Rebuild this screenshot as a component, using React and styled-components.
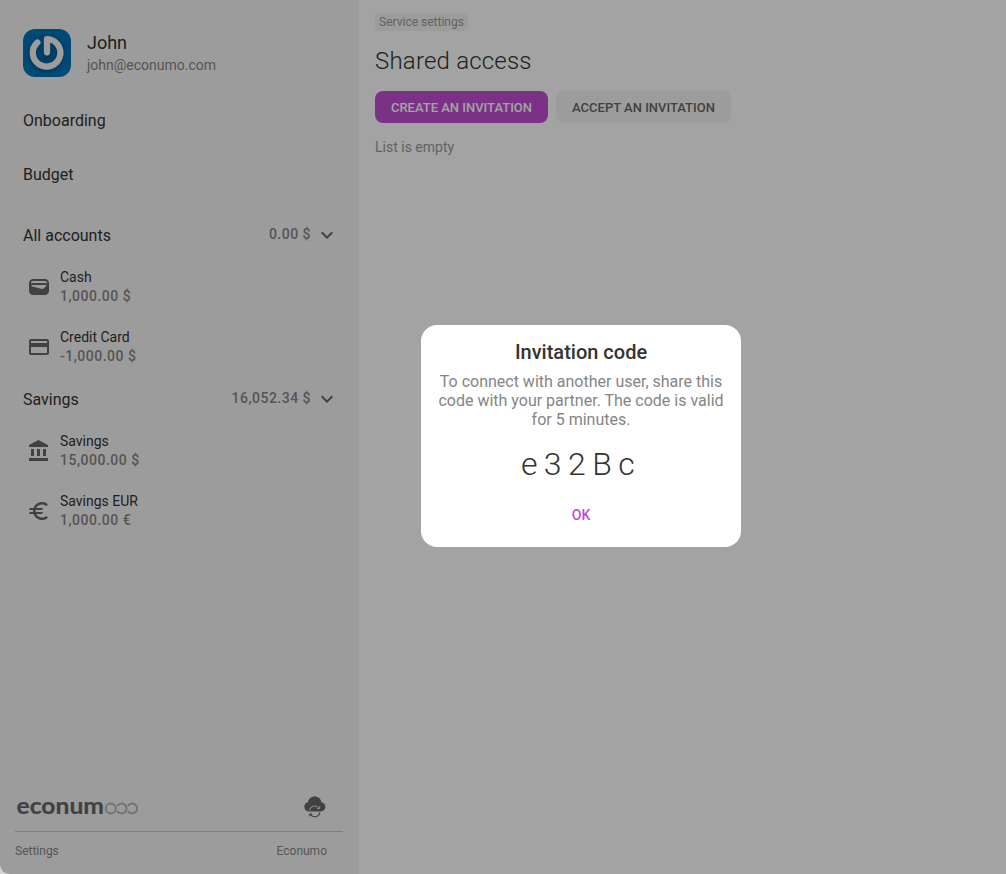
import React from "react";
import styled, { createGlobalStyle } from "styled-components";
import { MdCreditCard, MdExpandMore, MdWallet } from "react-icons/md";

const GlobalStyle = createGlobalStyle`
  * { box-sizing: border-box; }
  body {
    margin: 0;
    background: #d6d6d6;
    font-family: Roboto, "Liberation Sans", sans-serif;
    color: #333;
  }
  button { font-family: inherit; border: 0; cursor: pointer; }
`;

const Window = styled.div`
  display: flex;
  width: 1006px;
  height: 874px;
  overflow: hidden;
  border-radius: 0 0 0 9px;
  background: #fff;
`;

const Sidebar = styled.aside`
  display: flex;
  flex-direction: column;
  width: 359px;
  flex: none;
  padding-top: 29px;
  background: #f5f5f5;
`;

const Profile = styled.div`
  display: flex;
  gap: 16px;
  padding: 0 23px;
  margin-bottom: 16px;
`;

const Avatar = styled.svg`
  width: 48px;
  height: 48px;
  border-radius: 12px;
`;

const ProfileText = styled.div`
  display: flex;
  flex-direction: column;
  padding-top: 3px;
`;

const ProfileName = styled.div`
  font-size: 18px;
  line-height: 22px;
`;

const ProfileEmail = styled.div`
  font-size: 14px;
  line-height: 22px;
  color: #858585;
`;

const NavItem = styled.a`
  display: flex;
  align-items: center;
  height: 54px;
  padding: 0 23px;
  font-size: 16px;
`;

const Folders = styled.div`
  padding-top: 12px;
`;

const FolderHeader = styled.div`
  display: flex;
  align-items: center;
  height: 44px;
  padding: 0 20px 0 23px;
  color: #666;
`;

const FolderName = styled.div`
  flex: 1;
  font-size: 16px;
  color: #333;
`;

const FolderBalance = styled.div`
  margin-right: 4px;
  padding-bottom: 2px;
  font-size: 14px;
  font-weight: 500;
  letter-spacing: 0.48px;
  color: #858585;
`;

const AccountRow = styled.div`
  display: flex;
  align-items: center;
  gap: 9px;
  height: 60px;
  padding-left: 27px;
  color: #666;
`;

const AccountName = styled.div`
  font-size: 14px;
  line-height: 19px;
  color: #333;
`;

const AccountBalance = styled.div`
  font-size: 14px;
  line-height: 19px;
  font-weight: 500;
  letter-spacing: 0.5px;
  color: #858585;
`;

const Footer = styled.footer`
  margin: auto 16px 0 15px;
`;

const BrandRow = styled.div`
  display: flex;
  align-items: center;
  justify-content: space-between;
  height: 50px;
  padding: 0 16px 0 1px;
  border-bottom: 1px solid #c8c8c8;
`;

const Brand = styled.svg`
  width: 124px;
  height: 36px;
  font-family: Lato, sans-serif;
`;

const FooterLinks = styled.div`
  display: flex;
  justify-content: space-between;
  align-items: center;
  height: 42px;
  padding: 0 16px 4px 0;
  font-size: 12px;
  color: #858585;
`;

const Main = styled.main`
  display: flex;
  flex-direction: column;
  align-items: flex-start;
  flex: 1;
  padding: 13px 16px;
`;

const Crumb = styled.div`
  height: 18px;
  padding: 0 4px;
  border-radius: 4px;
  background: #f5f5f5;
  font-size: 12px;
  line-height: 18px;
  color: #999;
`;

const PageTitle = styled.h1`
  margin: 14px 0 14px;
  font-size: 24px;
  line-height: 32px;
  font-weight: 300;
  letter-spacing: 0.2px;
`;

const Actions = styled.div`
  display: flex;
  gap: 8px;
`;

const ActionButton = styled.button`
  width: ${(p) => p.$width}px;
  height: 32px;
  padding: 0;
  border-radius: 8px;
  font-size: 13px;
  font-weight: 500;
  white-space: nowrap;
  background: ${(p) => (p.$primary ? "#c04ed2" : "#f5f5f5")};
  color: ${(p) => (p.$primary ? "#fff" : "#666")};
`;

const Empty = styled.p`
  margin: 14px 0 0;
  font-size: 14px;
  line-height: 20px;
  color: #999;
`;

const Backdrop = styled.div`
  position: absolute;
  top: 0;
  left: 0;
  width: 1006px;
  height: 874px;
  border-radius: 0 0 0 9px;
  background: rgba(0, 0, 0, 0.36);
`;

const Dialog = styled.section`
  position: absolute;
  top: 325px;
  left: 421px;
  display: flex;
  flex-direction: column;
  align-items: center;
  width: 320px;
  height: 222px;
  padding: 15px 16px 0;
  border-radius: 16px;
  background: #fff;
  text-align: center;
`;

const DialogTitle = styled.h2`
  margin: 0 0 7px;
  font-size: 20px;
  line-height: 25px;
  font-weight: 500;
`;

const DialogText = styled.p`
  margin: 0;
  font-size: 16px;
  line-height: 19px;
  color: #858585;
`;

const Code = styled.div`
  margin-top: 16px;
  font-size: 32px;
  line-height: 38px;
  font-weight: 300;
  letter-spacing: 6.4px;
`;

const OkButton = styled.button`
  margin-top: 16px;
  height: 32px;
  padding: 0 16px;
  background: transparent;
  color: #c04ed2;
  font-size: 14px;
  font-weight: 500;
`;

const BankIcon = () => (
  <svg width="24" height="24" viewBox="0 0 24 24" fill="currentColor">
    <path d="M4 10v7h3v-7H4zm6 0v7h3v-7h-3zM2 22h19v-3H2v3zm14-12v7h3v-7h-3zm-4.5-9L2 6v2h19V6l-9.5-5z" />
  </svg>
);

const EuroIcon = () => (
  <svg width="24" height="24" viewBox="0 0 24 24" fill="currentColor">
    <path d="M15 18.5c-2.51 0-4.68-1.42-5.76-3.5H15l1-2H8.58c-.05-.33-.08-.66-.08-1s.03-.67.08-1H15l1-2H9.24C10.32 6.92 12.5 5.5 15 5.5c1.61 0 3.09.59 4.23 1.57L21 5.3C19.41 3.87 17.3 3 15 3c-3.92 0-7.24 2.51-8.48 6H3l-1 2h4.06c-.04.33-.06.66-.06 1s.02.67.06 1H3l-1 2h4.52c1.24 3.49 4.56 6 8.48 6 2.31 0 4.41-.87 6-2.3l-1.78-1.77c-1.13.98-2.6 1.57-4.22 1.57z" />
  </svg>
);

const CloudSyncIcon = () => (
  <svg width="24" height="24" viewBox="0 0.7 24 24" fill="none">
    <path
      d="M5.8 17.2C3 17 1.3 15 1.3 12.5c0-2.3 1.5-4.1 3.700-4.500C5.3 4.6 8.2 2.2 11.7 2.2s6.3 2.400 6.700 5.800c2.300.400 4 2.200 4 4.500 0 2.500-1.900 4.700-4.700 4.700z"
      fill="#666"
    />
    <path d="M6.5 16A5.2 5.2 0 0 1 15.6 13.5M16.6 12v2.2h-2.4" stroke="#f5f5f5" strokeWidth="0.9" />
    <path d="M16.9 18A5.2 5.2 0 0 1 7.8 20.500M6.8 22v-2.200h2.400" stroke="#666" strokeWidth="1.1" />
  </svg>
);

const accountFolders = [
  {
    name: "All accounts",
    balance: "0.00 $",
    accounts: [
      { name: "Cash", balance: "1,000.00 $", icon: <MdWallet size={24} /> },
      { name: "Credit Card", balance: "-1,000.00 $", icon: <MdCreditCard size={24} /> },
    ],
  },
  {
    name: "Savings",
    balance: "16,052.34 $",
    accounts: [
      { name: "Savings", balance: "15,000.00 $", icon: <BankIcon /> },
      { name: "Savings EUR", balance: "1,000.00 €", icon: <EuroIcon /> },
    ],
  },
];

export default function App() {
  return (
    <>
      <GlobalStyle />
      <Window>
        <Sidebar>
          <Profile>
            <Avatar viewBox="0 0 48 48">
              <defs>
                <radialGradient id="avatarBlue" cx="50%" cy="50%" r="70%">
                  <stop offset="0" stopColor="#005c9c" />
                  <stop offset="0.6" stopColor="#0070b4" />
                  <stop offset="1" stopColor="#007cc4" />
                </radialGradient>
                <filter id="avatarShade" x="-20%" y="-20%" width="140%" height="140%">
                  <feDropShadow dx="0" dy="0.5" stdDeviation="1" floodColor="#002c50" floodOpacity="0.7" />
                </filter>
              </defs>
              <rect width="48" height="48" fill="url(#avatarBlue)" />
              <path
                d="M14.4 13.5A13.8 13.8 0 1 0 24 10V23.3"
                fill="none"
                stroke="#f4f4f4"
                strokeWidth="6.2"
                strokeLinecap="round"
                strokeLinejoin="round"
                filter="url(#avatarShade)"
              />
            </Avatar>
            <ProfileText>
              <ProfileName>John</ProfileName>
              <ProfileEmail>john@econumo.com</ProfileEmail>
            </ProfileText>
          </Profile>
          <nav>
            <NavItem>Onboarding</NavItem>
            <NavItem>Budget</NavItem>
          </nav>
          <Folders>
            {accountFolders.map((folder) => (
              <div key={folder.name}>
                <FolderHeader>
                  <FolderName>{folder.name}</FolderName>
                  <FolderBalance>{folder.balance}</FolderBalance>
                  <MdExpandMore size={24} />
                </FolderHeader>
                {folder.accounts.map((account) => (
                  <AccountRow key={account.name}>
                    {account.icon}
                    <div>
                      <AccountName>{account.name}</AccountName>
                      <AccountBalance>{account.balance}</AccountBalance>
                    </div>
                  </AccountRow>
                ))}
              </div>
            ))}
          </Folders>
          <Footer>
            <BrandRow>
              <Brand viewBox="0 0 124 36">
                <text
                  x="0.5"
                  y="25"
                  fontSize="23"
                  fontWeight="700"
                  fill="#666"
                  stroke="#666"
                  strokeWidth="0.2"
                  textLength="87.5"
                  lengthAdjust="spacingAndGlyphs"
                >
                  econum
                </text>
                <g fill="none" stroke="#b2b2b2" strokeWidth="1.9">
                  <circle cx="94.8" cy="19.5" r="5" />
                  <path d="M101.3 16.95A5 5 0 1 1 101.3 22.05" />
                  <path d="M111.8 16.95A5 5 0 1 1 111.8 22.05" />
                </g>
              </Brand>
              <CloudSyncIcon />
            </BrandRow>
            <FooterLinks>
              <span>Settings</span>
              <span>Econumo</span>
            </FooterLinks>
          </Footer>
        </Sidebar>
        <Main>
          <Crumb>Service settings</Crumb>
          <PageTitle>Shared access</PageTitle>
          <Actions>
            <ActionButton $primary $width={173}>CREATE AN INVITATION</ActionButton>
            <ActionButton $width={175}>ACCEPT AN INVITATION</ActionButton>
          </Actions>
          <Empty>List is empty</Empty>
        </Main>
      </Window>
      <Backdrop>
        <Dialog>
          <DialogTitle>Invitation code</DialogTitle>
          <DialogText>
            To connect with another user, share this code with your partner. The code is valid for 5 minutes.
          </DialogText>
          <Code>e32Bc</Code>
          <OkButton>OK</OkButton>
        </Dialog>
      </Backdrop>
    </>
  );
}
